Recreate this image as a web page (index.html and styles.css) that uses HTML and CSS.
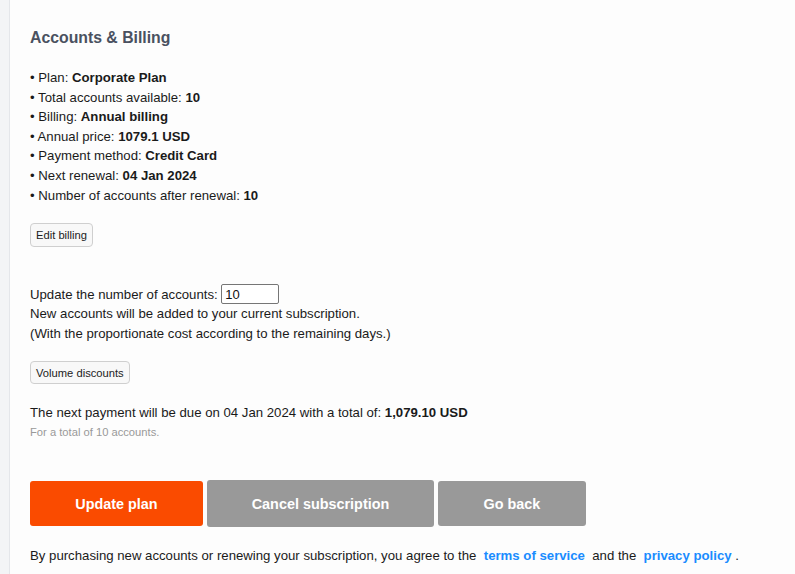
FILE: index.html
```html
<!DOCTYPE html>
<html>
<head>
<meta charset="utf-8">
<link rel="stylesheet" href="styles.css">
</head>
<body>
<div class="layout">
  <div class="strip"></div>
  <main class="main">
    <h1 class="title">Accounts &amp; Billing</h1>
    <ul class="facts">
      <li>• Plan: <b>Corporate Plan</b></li>
      <li>• Total accounts available: <b>10</b></li>
      <li>• Billing: <b>Annual billing</b></li>
      <li>• Annual price: <b>1079.1 USD</b></li>
      <li>• Payment method: <b>Credit Card</b></li>
      <li>• Next renewal: <b>04 Jan 2024</b></li>
      <li>• Number of accounts after renewal: <b>10</b></li>
    </ul>
    <button class="small-btn edit">Edit billing</button>
    <div class="update">
      <div>Update the number of accounts: <input class="num" type="text" value="10"></div>
      <div>New accounts will be added to your current subscription.</div>
      <div>(With the proportionate cost according to the remaining days.)</div>
    </div>
    <button class="small-btn volume">Volume discounts</button>
    <p class="due">The next payment will be due on 04 Jan 2024 with a total of: <b>1,079.10 USD</b></p>
    <p class="note">For a total of 10 accounts.</p>
    <div class="actions">
      <button class="big-btn primary">Update plan</button>
      <button class="big-btn grey cancel">Cancel subscription</button>
      <button class="big-btn grey back">Go back</button>
    </div>
    <p class="terms">By purchasing new accounts or renewing your subscription, you agree to the &nbsp;<a href="#">terms of service</a>&nbsp; and the &nbsp;<a href="#">privacy policy</a>&nbsp;.</p>
  </main>
</div>
</body>
</html>
```
FILE: styles.css
```css
html, body {
  margin: 0;
  padding: 0;
  background: #fdfdfd;
  font-family: "Liberation Sans", Arial, sans-serif;
  color: #1a1a1a;
  font-size: 13.2px;
}
.layout {
  display: flex;
  min-height: 574px;
}
.strip {
  width: 9px;
  flex: none;
  background: #f3f4f6;
  border-right: 1px solid #e4e6ea;
}
.main {
  padding: 28px 0 0 20px;
  flex: 1;
}
.title {
  margin: 0;
  font-size: 15.8px;
  font-weight: bold;
  color: #4a5160;
  line-height: 20px;
}
.facts {
  list-style: none;
  margin: 20px 0 0;
  padding: 0;
  line-height: 19.6px;
}
.small-btn {
  display: block;
  font-family: "Liberation Sans", Arial, sans-serif;
  font-size: 11.2px;
  color: #222;
  background: #f8f8f8;
  border: 1px solid #cfcfcf;
  border-radius: 4px;
  padding: 0 5px;
  height: 23px;
}
.edit { margin-top: 18px; height: 24px; }
.update {
  margin-top: 37px;
  line-height: 19.6px;
}
.num {
  width: 50px;
  height: 16px;
  font-family: "Liberation Sans", Arial, sans-serif;
  font-size: 13px;
  padding: 1px 3px;
  border: 1px solid #767676;
  border-radius: 2px;
  margin: 0;
  vertical-align: 0;
  color: #111;
}
.volume { margin-top: 18px; }
.due {
  margin: 19px 0 0;
  line-height: 19px;
}
.note {
  margin: 3px 0 0;
  font-size: 11.2px;
  color: #999;
  line-height: 14px;
}
.actions {
  display: flex;
  align-items: flex-start;
  gap: 4px;
  margin-top: 42px;
}
.big-btn {
  height: 45px;
  border: none;
  border-radius: 3px;
  color: #fff;
  font-family: "Liberation Sans", Arial, sans-serif;
  font-weight: bold;
  font-size: 14.4px;
}
.primary { background: #fa4b00; width: 173px; }
.grey { background: #999; }
.cancel { width: 227px; height: 47px; margin-top: -1px; }
.back { width: 148px; }
.terms {
  margin: 19px 0 0;
  line-height: 19px;
}
.terms a {
  color: #1a8cff;
  font-weight: bold;
  text-decoration: none;
}
```
